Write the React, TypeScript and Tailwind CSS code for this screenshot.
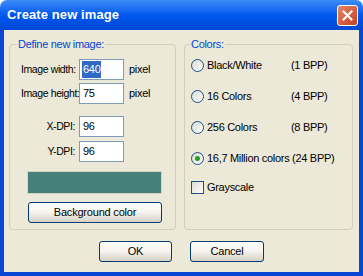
import React, { useState } from 'react';

const font = { fontFamily: '"Liberation Sans", Arial, sans-serif' };

const XpButton: React.FC<{ label: string; className?: string }> = ({ label, className = '' }) => (
  <button
    className={`h-[21px] rounded-[3px] border border-[#003C74] bg-gradient-to-b from-white via-[#F4F3EE] to-[#D6D0C5] text-[11px] tracking-[-0.2px] text-black leading-none ${className}`}
  >
    {label}
  </button>
);

const Radio: React.FC<{ checked?: boolean }> = ({ checked }) => (
  <span className="w-[13px] h-[13px] rounded-full border border-[#1C5180] bg-gradient-to-br from-[#DCD9D0] to-white flex items-center justify-center shrink-0">
    {checked && <span className="w-[5px] h-[5px] rounded-full bg-[#21A121]" />}
  </span>
);

const Field: React.FC<{ label: string; value: string; right?: boolean; unit?: string; selected?: boolean }> = ({
  label,
  value,
  right,
  unit,
  selected,
}) => (
  <div className="flex items-center h-[21px]">
    <span className={`w-[69px] shrink-0 whitespace-nowrap text-[10.5px] tracking-[-0.4px] ${right ? 'text-right pr-[4px]' : 'pl-[11px]'}`}>
      {label}
    </span>
    <div className="w-[45px] h-[21px] border border-[#7F9DB9] bg-white flex items-center pl-[2px] text-[11px]">
      {selected ? <span className="bg-[#316AC5] text-white px-[1px]">{value}</span> : <span className="px-[1px]">{value}</span>}
    </div>
    {unit && <span className="ml-[5px] text-[11px]">{unit}</span>}
  </div>
);

export default function App() {
  const [depth] = useState(3);
  const colors = [
    { name: 'Black/White', bpp: '(1 BPP)' },
    { name: '16 Colors', bpp: '(4 BPP)' },
    { name: '256 Colors', bpp: '(8 BPP)' },
  ];

  return (
    <div className="w-[363px] h-[276px] flex flex-col text-black select-none" style={font}>
      {/* TITLE BAR */}
      <div className="h-[30px] shrink-0 rounded-t-[7px] bg-gradient-to-b from-[#3C8CF8] via-[#0058EE] to-[#0047D6] flex items-center justify-between pl-[7px] pr-[5px]">
        <span className="text-white font-bold text-[13px] tracking-[0.1px]">Create new image</span>
        <span className="w-[21px] h-[21px] rounded-[3px] border border-white bg-gradient-to-br from-[#E4866A] to-[#C3401B] flex items-center justify-center">
          <svg width="11" height="11" viewBox="0 0 11 11">
            <path d="M1.5 1.5 L9.5 9.5 M9.5 1.5 L1.5 9.5" stroke="white" strokeWidth="2" strokeLinecap="square" />
          </svg>
        </span>
      </div>

      {/* BODY */}
      <div className="flex-1 bg-[#0847D4] px-[4px] pb-[4px] flex">
        <div className="flex-1 bg-[#ECE9D8] flex flex-col pt-[8px] pl-[5px] tracking-[-0.3px]">
          <div className="flex gap-[8px]">
            {/* LEFT GROUP */}
            <fieldset className="w-[167px] h-[192px] border border-[#D0D0BF] rounded-[4px]">
              <legend className="ml-[7px] px-[1px] text-[11px] text-[#0046D5] leading-[13px]">Define new image:</legend>
              <div className="flex flex-col pt-[8px]">
                <Field label="Image width:" value="640" unit="pixel" selected />
                <div className="h-[3px]" />
                <Field label="Image height:" value="75" unit="pixel" />
                <div className="h-[12px]" />
                <Field label="X-DPI:" value="96" right />
                <div className="h-[4px]" />
                <Field label="Y-DPI:" value="96" right />
                <div className="ml-[17px] mt-[9px] w-[135px] h-[23px] bg-[#458079] border border-[#D8D4C4]" />
                <XpButton label="Background color" className="ml-[18px] mt-[8px] w-[134px]" />
              </div>
            </fieldset>

            {/* RIGHT GROUP */}
            <fieldset className="w-[169px] h-[192px] border border-[#D0D0BF] rounded-[4px]">
              <legend className="ml-[5px] px-[1px] text-[11px] text-[#0046D5] leading-[13px]">Colors:</legend>
              <div className="flex flex-col pl-[6px] pt-[8px] gap-[18px]">
                {colors.map((c, i) => (
                  <div key={c.name} className="flex items-center h-[13px] text-[11px]">
                    <Radio checked={depth === i} />
                    <span className="ml-[3px] w-[84px]">{c.name}</span>
                    <span>{c.bpp}</span>
                  </div>
                ))}
                <div className="flex items-center h-[13px] text-[11px]">
                  <Radio checked={depth === 3} />
                  <span className="ml-[3px]">16,7 Million colors (24 BPP)</span>
                </div>
                <div className="flex items-center h-[13px] text-[11px] -mt-[2px]">
                  <span className="w-[13px] h-[13px] border border-[#1C5180] bg-gradient-to-br from-[#DCD9D0] to-white shrink-0" />
                  <span className="ml-[3px]">Grayscale</span>
                </div>
              </div>
            </fieldset>
          </div>

          {/* ACTIONS */}
          <div className="flex gap-[18px] mt-[11px] pl-[90px]">
            <XpButton label="OK" className="w-[73px]" />
            <XpButton label="Cancel" className="w-[74px]" />
          </div>
        </div>
      </div>
    </div>
  );
}
